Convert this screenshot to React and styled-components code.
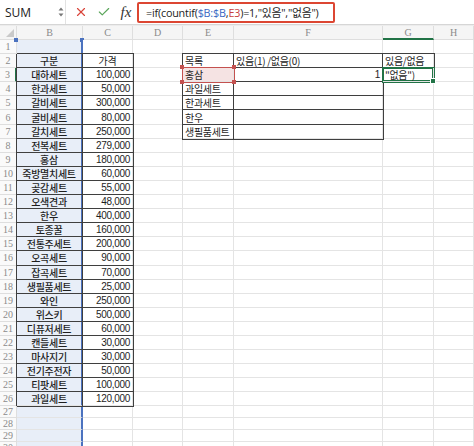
import React from 'react'
import styled, { createGlobalStyle, css } from 'styled-components'
import { X, Check } from 'lucide-react'

const GlobalStyle = createGlobalStyle`
  html, body {
    margin: 0;
    padding: 0;
    background: #fff;
    overflow: hidden;
  }
  body {
    font-family: "Noto Sans CJK KR", "Noto Sans", sans-serif;
    color: #222;
  }
`

const Page = styled.div`
  width: 474px;
  height: 446px;
  overflow: hidden;
  background: #fff;
`

const FormulaBar = styled.div`
  height: 24px;
  display: flex;
  align-items: center;
  border-bottom: 1px solid #d6d6d6;
  box-shadow: 0 1px 0 #ececec;
  margin-bottom: 1px;
`

const NameBox = styled.div`
  width: 52px;
  padding-left: 5px;
  font-family: "Open Sans", "Liberation Sans", sans-serif;
  font-size: 12px;
  color: #222;
`

const Spinner = styled.div`
  width: 8px;
  display: flex;
  justify-content: center;
`

const Divider = styled.div`
  width: 1px;
  align-self: stretch;
  background: #e2e2e2;
  margin: 0 3px 0 0;
`

const IconButton = styled.div`
  width: 23px;
  display: flex;
  align-items: center;
  justify-content: center;
  color: ${p => p.$color};
`

const Fx = styled.div`
  width: 22px;
  text-align: center;
  font-family: "Liberation Serif", serif;
  font-style: italic;
  font-size: 15px;
  color: #333;
`

const FormulaBox = styled.div`
  width: 187px;
  height: 17px;
  border: 2px solid #dc4632;
  border-radius: 2px;
  padding-left: 7px;
  display: flex;
  align-items: center;
  font-family: "Open Sans", "Noto Sans CJK KR", sans-serif;
  font-size: 10.8px;
  letter-spacing: -0.2px;
  white-space: nowrap;
  color: #222;
`

const Ref = styled.span`
  color: ${p => p.$color};
`

const Sheet = styled.div`
  display: grid;
  grid-template-columns: 17px 66px 50px 50px 51px 149px 51px 40px;
  grid-template-rows: 14px repeat(26, 14.1px) repeat(4, 12px);
  font-size: 10px;
`

const headerBase = css`
  background: #f5f5f5;
  border-right: 1px solid #dedede;
  border-bottom: 1px solid #dedede;
  font-family: "Liberation Serif", serif;
  color: #8a8a8a;
  font-size: 10px;
  display: flex;
  align-items: center;
  justify-content: center;
  box-sizing: border-box;
  overflow: hidden;
`

const Corner = styled.div`
  ${headerBase};
  justify-content: flex-end;
  align-items: flex-end;
  padding: 0 2px 2px 0;
`

const ColHead = styled.div`
  ${headerBase};
  ${p => p.$active && css`
    border-bottom: 2px solid #217346;
  `}
`

const RowHead = styled.div`
  ${headerBase};
  background: #fafafa;
  ${p => p.$active && css`
    border-right: 2px solid #217346;
  `}
`

const Cell = styled.div`
  position: relative;
  box-sizing: border-box;
  border-right: 1px solid #e4e4e4;
  border-bottom: 1px solid #e4e4e4;
  padding: 0 2px;
  display: flex;
  align-items: center;
  justify-content: ${p => p.$align === 'right' ? 'flex-end' : p.$align === 'center' ? 'center' : 'flex-start'};
  white-space: nowrap;
  font-size: 10px;
  letter-spacing: -0.3px;
  font-family: ${p => p.$num ? '"Liberation Sans", "Noto Sans", sans-serif' : '"Noto Sans CJK KR", "Noto Sans", sans-serif'};
  font-weight: ${p => p.$bold ? 500 : 400};
  color: #1e1e1e;
  background: ${p => p.$tone === 'blue' ? '#e8eef8' : p.$tone === 'pink' ? '#f5e3e3' : '#fff'};
  ${p => p.$table && css`
    z-index: 1;
    box-shadow: 0 0 0 1px #3f3f3f;
  `}
  ${p => p.$colB && css`
    border-right: 2px solid #4b72bf;
  `}
  ${p => p.$colB && p.$table && css`
    box-shadow: -1px 0 0 #3f3f3f, 0 -1px 0 #3f3f3f, 0 1px 0 #3f3f3f;
  `}
  ${p => p.$ref && css`
    z-index: 2;
    box-shadow: 0 0 0 1px #c4514f;
  `}
  ${p => p.$active && css`
    z-index: 2;
    box-shadow: 0 0 0 1px #217346, inset 0 0 0 1px #217346;
    &::after {
      content: '';
      position: absolute;
      right: -3px;
      bottom: -3px;
      width: 4px;
      height: 4px;
      background: #217346;
      border: 1px solid #fff;
    }
  `}
`

const Handle = styled.span`
  position: absolute;
  width: 4px;
  height: 4px;
  background: ${p => p.$color};
  ${p => p.$top ? 'top: -3px;' : 'bottom: -3px;'}
  ${p => p.$left ? 'left: -3px;' : 'right: -3px;'}
`

const Handles = ({ color }) => (
  <>
    <Handle $color={color} $top $left />
    <Handle $color={color} $top />
    <Handle $color={color} $left />
    <Handle $color={color} />
  </>
)

const TopHandle = styled.span`
  position: absolute;
  top: -2px;
  ${p => p.$side}: -3px;
  width: 4px;
  height: 4px;
  background: #4b72bf;
`

const COLS = ['B', 'C', 'D', 'E', 'F', 'G', 'H']

const gifts = [
  ['대하세트', '100,000'],
  ['한과세트', '50,000'],
  ['갈비세트', '300,000'],
  ['굴비세트', '80,000'],
  ['갈치세트', '250,000'],
  ['전복세트', '279,000'],
  ['홍삼', '180,000'],
  ['죽방멸치세트', '60,000'],
  ['곶감세트', '55,000'],
  ['오색견과', '48,000'],
  ['한우', '400,000'],
  ['토종꿀', '160,000'],
  ['전통주세트', '200,000'],
  ['오곡세트', '90,000'],
  ['잡곡세트', '70,000'],
  ['생필품세트', '25,000'],
  ['와인', '250,000'],
  ['위스키', '500,000'],
  ['디퓨저세트', '60,000'],
  ['캔들세트', '30,000'],
  ['마사지기', '30,000'],
  ['전기주전자', '50,000'],
  ['티팟세트', '100,000'],
  ['과일세트', '120,000'],
]

const items = ['홍삼', '과일세트', '한과세트', '한우', '생필품세트']

const cellFor = (row, col) => {
  const p = {}
  let text = ''
  if (col === 'B') {
    p.$colB = true
    p.$tone = 'blue'
    p.$align = 'center'
    if (row === 2) { text = '구분'; p.$table = true; p.$bold = true }
    if (row >= 3 && row <= 26) { text = gifts[row - 3][0]; p.$table = true; p.$bold = true }
  }
  if (col === 'C') {
    if (row === 2) { text = '가격'; p.$table = true; p.$align = 'center' }
    if (row >= 3 && row <= 26) { text = gifts[row - 3][1]; p.$table = true; p.$align = 'right'; p.$num = true }
  }
  if (col === 'E') {
    if (row === 2) { text = '목록'; p.$table = true }
    if (row >= 3 && row <= 7) { text = items[row - 3]; p.$table = true }
    if (row === 3) { p.$ref = true; p.$tone = 'pink' }
  }
  if (col === 'F') {
    if (row === 2) { text = '있음(1) /없음(0)'; p.$table = true }
    if (row >= 3 && row <= 7) p.$table = true
    if (row === 3) { text = '1'; p.$align = 'right'; p.$num = true }
  }
  if (col === 'G') {
    if (row === 2) { text = '있음/없음'; p.$table = true }
    if (row === 3) { text = '"없음")'; p.$active = true }
  }
  return { p, text }
}

const rows = Array.from({ length: 30 }, (_, i) => i + 1)

const App = () => {
  return (
    <Page>
      <GlobalStyle />
      <FormulaBar>
        <NameBox>SUM</NameBox>
        <Spinner>
          <svg width="6" height="12" viewBox="0 0 6 12">
            <path d="M0.5 4.5 L3 1.5 L5.5 4.5 Z" fill="#777" />
            <path d="M0.5 7.5 L3 10.5 L5.5 7.5 Z" fill="#777" />
          </svg>
        </Spinner>
        <Divider />
        <IconButton $color="#d9443a"><X size={14} strokeWidth={2} /></IconButton>
        <IconButton $color="#5aa55a"><Check size={14} strokeWidth={2} /></IconButton>
        <Fx>fx</Fx>
        <FormulaBox>
          =if(countif(<Ref $color="#3a67c2">$B:$B</Ref>,<Ref $color="#c8413c">E3</Ref>)=1,"있음","없음")
        </FormulaBox>
      </FormulaBar>

      <Sheet>
        <Corner>
          <svg width="8" height="8" viewBox="0 0 8 8">
            <path d="M8 0 L8 8 L0 8 Z" fill="#c9c9c9" />
          </svg>
        </Corner>
        {COLS.map(c => (
          <ColHead key={c} $active={c === 'G'}>{c}</ColHead>
        ))}
        {rows.map(r => (
          <React.Fragment key={r}>
            <RowHead $active={r === 3}>{r}</RowHead>
            {COLS.map(c => {
              const { p, text } = cellFor(r, c)
              return (
                <Cell key={c} {...p}>
                  {text}
                  {p.$ref && <Handles color="#c4514f" />}
                  {r === 1 && c === 'B' && (
                    <>
                      <TopHandle $side="left" />
                      <TopHandle $side="right" />
                    </>
                  )}
                </Cell>
              )
            })}
          </React.Fragment>
        ))}
      </Sheet>
    </Page>
  )
}

export default App
